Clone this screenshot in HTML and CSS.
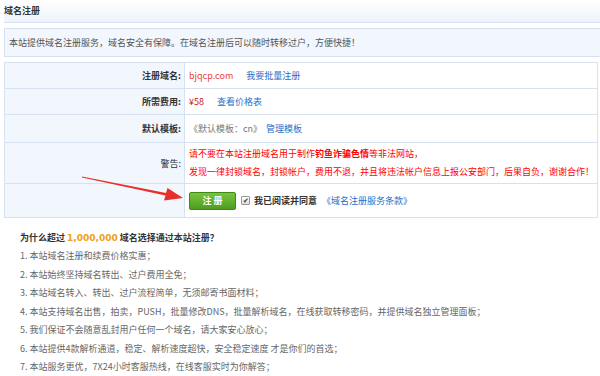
FILE: index.html
```html
<!DOCTYPE html>
<html lang="zh-CN">
<head>
    <meta charset="UTF-8">
    <title>域名注册</title>
    <link rel="stylesheet" href="styles.css">
</head>
<body>
    <div class="page">
        <div class="hd">域名注册</div>
        <div class="notice">本站提供域名注册服务，域名安全有保障。在域名注册后可以随时转移过户，方便快捷！</div>

        <table class="reg">
            <tr class="r1">
                <th>注册域名:</th>
                <td><span class="domain">bjqcp.com</span><a class="link">我要批量注册</a></td>
            </tr>
            <tr class="r2">
                <th>所需费用:</th>
                <td><span class="price">¥58</span><a class="link">查看价格表</a></td>
            </tr>
            <tr class="r3">
                <th>默认模板:</th>
                <td><span class="tpl">《默认模板：cn》</span><a class="link near">管理模板</a></td>
            </tr>
            <tr class="r4">
                <th class="plain">警告:</th>
                <td class="warn">
                    请不要在本站注册域名用于制作<b>钓鱼诈骗色情</b>等非法网站，<br>
                    发现一律封锁域名，封锁帐户，费用不退，并且将违法帐户信息上报公安部门，后果自负，谢谢合作！
                </td>
            </tr>
            <tr class="r5">
                <th></th>
                <td>
                    <div class="agree">
                        <button class="btn">注 册</button>
                        <span class="check">&#10004;</span>
                        <b class="read">我已阅读并同意</b>
                        <a class="link">《域名注册服务条款》</a>
                    </div>
                </td>
            </tr>
        </table>

        <div class="why">
            <h4>为什么超过 <em>1,000,000</em> 域名选择通过本站注册？</h4>
            <p>1. 本站域名注册和续费价格实惠；</p>
            <p>2. 本站始终坚持域名转出、过户费用全免；</p>
            <p>3. 本站域名转入、转出、过户流程简单，无须邮寄书面材料；</p>
            <p>4. 本站支持域名出售，拍卖，PUSH，批量修改DNS，批量解析域名，在线获取转移密码，并提供域名独立管理面板；</p>
            <p>5. 我们保证不会随意乱封用户任何一个域名，请大家安心放心；</p>
            <p>6. 本站提供4款解析通道，稳定、解析速度超快，安全稳定速度 才是你们的首选；</p>
            <p>7. 本站服务更优，7X24小时客服热线，在线客服实时为你解答；</p>
        </div>

        <svg class="arrow" width="110" height="32" viewBox="0 0 110 32">
            <polygon points="0,0.5 84,17 85.5,12 101,22 82,24.5 83.5,19.5 0,1.5" fill="#e8302a"/>
        </svg>
    </div>
</body>
</html>
```

FILE: styles.css
```css
body {
    margin: 0;
    background: #fff;
    font-family: "Noto Sans CJK SC", "Liberation Sans", sans-serif;
    font-size: 9px;
    color: #555;
}
.page {
    position: relative;
    width: 600px;
    height: 376px;
    overflow: hidden;
}
.hd {
    height: 22px;
    line-height: 22px;
    margin-left: 4px;
    padding-left: 0;
    color: #333;
    font-weight: bold;
    background: linear-gradient(#ffffff, #eef3fb);
    border-bottom: 1px solid #d6e2f2;
}
.notice {
    margin: 5px 0 0 4px;
    height: 27px;
    line-height: 27px;
    padding-left: 4px;
    background: #f2f6fd;
    border: 1px solid #d6e2f2;
    border-right: none;
}
.reg {
    margin: 5px 0 0 4px;
    width: 594px;
    border-collapse: collapse;
}
.reg th, .reg td {
    border: 1px solid #d6e2f2;
    padding: 0;
    font-size: 9px;
}
.reg th {
    width: 176px;
    padding-right: 3px;
    text-align: right;
    background: #f2f6fd;
    color: #333;
}
.reg th.plain {
    font-weight: normal;
}
.reg td {
    padding-left: 4px;
}
.r1 td, .r1 th, .r2 td, .r2 th { height: 25px; }
.r3 td, .r3 th { height: 27px; }
.r4 td, .r4 th { height: 40px; }
.r5 td, .r5 th { height: 33px; }
.domain {
    color: #e8413c;
    margin-right: 13px;
}
.price {
    color: #c0141b;
    margin-right: 13px;
}
.tpl {
    color: #777;
    margin-right: 4px;
}
.link {
    color: #1e6fc8;
    text-decoration: none;
}
.warn {
    color: #f00;
    line-height: 18px;
}
.warn b {
    font-weight: bold;
}
.agree {
    display: flex;
    align-items: center;
}
.btn {
    width: 47px;
    height: 18px;
    padding: 0;
    border: 1px solid #3f8a17;
    border-radius: 2px;
    background: linear-gradient(#78c43f, #4c9d1f);
    color: #fff;
    font-family: inherit;
    font-size: 9px;
    font-weight: bold;
}
.check {
    width: 7px;
    height: 7px;
    margin-left: 5px;
    border: 1px solid #999;
    border-radius: 1px;
    background: linear-gradient(#fff, #ddd);
    color: #333;
    font-size: 7px;
    line-height: 7px;
    text-align: center;
}
.read {
    margin-left: 4px;
    color: #333;
}
.agree .link {
    margin-left: 5px;
}
.why {
    padding: 11px 0 0 20px;
}
.why h4 {
    margin: 0;
    font-size: 9px;
    line-height: 18px;
    color: #333;
}
.why em {
    font-style: normal;
    font-family: "DejaVu Sans", sans-serif;
    color: #f0a020;
}
.why p {
    margin: 0;
    line-height: 18.5px;
    color: #666;
}
.arrow {
    position: absolute;
    left: 82px;
    top: 176px;
}
```
